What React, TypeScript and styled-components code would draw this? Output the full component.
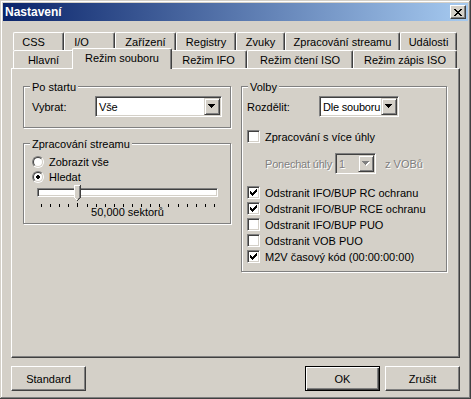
import React from 'react';
import styled, { createGlobalStyle } from 'styled-components';

const GlobalStyle = createGlobalStyle`
  html, body { margin: 0; padding: 0; background: #D4D0C8; }
  body {
    font-family: "Liberation Sans", Arial, sans-serif;
    font-size: 11px;
    color: #000;
  }
  * { box-sizing: border-box; }
`;

const Window = styled.div`
  width: 471px;
  height: 399px;
  background: #D4D0C8;
  padding: 3px;
  display: flex;
  flex-direction: column;
  box-shadow: inset -1px -1px 0 #404040, inset 1px 1px 0 #D4D0C8,
    inset -2px -2px 0 #808080, inset 2px 2px 0 #ffffff;
`;

const TitleBar = styled.div`
  height: 18px;
  flex: none;
  display: flex;
  align-items: center;
  justify-content: space-between;
  padding: 0 2px;
  background: linear-gradient(to right, #0a246a, #a6caf0);
`;

const Title = styled.span`
  color: #fff;
  font-weight: bold;
  font-size: 12px;
  white-space: nowrap;
`;

const CloseButton = styled.div`
  width: 16px;
  height: 14px;
  background: #d4d0c8;
  border: 1px solid;
  border-color: #fff #404040 #404040 #fff;
  box-shadow: inset -1px -1px 0 #808080;
  display: flex;
  align-items: center;
  justify-content: center;
`;

const Body = styled.div`
  flex: 1;
  display: flex;
  flex-direction: column;
  padding: 11px 8px 0 8px;
`;

const TabRows = styled.div`
  display: flex;
  flex-direction: column;
  padding-left: 2px;
`;

const TabRow = styled.div`
  display: flex;
  height: 18px;
`;

const Tab = styled.div<{ $w: number; $pr?: number; $selected?: boolean }>`
  width: ${(p) => p.$w}px;
  height: ${(p) => (p.$selected ? 21 : 18)}px;
  flex: none;
  background: #d4d0c8;
  border-top: 1px solid #fff;
  border-left: 1px solid #fff;
  border-right: 1px solid #404040;
  border-radius: 2px 2px 0 0;
  box-shadow: inset -1px 0 0 #808080;
  display: flex;
  align-items: center;
  justify-content: center;
  white-space: nowrap;
  padding-right: ${(p) => p.$pr ?? 0}px;
  padding-top: ${(p) => (p.$selected ? 0 : 1)}px;
  padding-bottom: ${(p) => (p.$selected ? 2 : 0)}px;
  margin: ${(p) => (p.$selected ? '-2px -2px -1px -2px' : '0')};
  position: ${(p) => (p.$selected ? 'relative' : 'static')};
  z-index: ${(p) => (p.$selected ? 1 : 'auto')};
`;

const Panel = styled.div`
  height: 290px;
  flex: none;
  border: 1px solid;
  border-color: #fff #404040 #404040 #fff;
  box-shadow: inset -1px -1px 0 #808080;
  padding: 17px 0 0 11px;
  display: grid;
  grid-template-columns: 208px 206px;
  column-gap: 10px;
  align-items: start;
`;

const Column = styled.div`
  display: flex;
  flex-direction: column;
  gap: 15px;
`;

const Group = styled.div<{ $h: number; $pl: number; $pt: number }>`
  position: relative;
  height: ${(p) => p.$h}px;
  border: 1px solid #808080;
  box-shadow: inset 1px 1px 0 #fff, 1px 1px 0 #fff;
  padding: ${(p) => p.$pt}px 8px 0 ${(p) => p.$pl}px;
  display: flex;
  flex-direction: column;
`;

const Legend = styled.span`
  position: absolute;
  top: -6px;
  left: 6px;
  padding: 0 2px;
  line-height: 13px;
  background: #d4d0c8;
  white-space: nowrap;
`;

const FieldRow = styled.div`
  display: flex;
  align-items: center;
  height: 21px;
`;

const FieldLabel = styled.span<{ $w: number; $disabled?: boolean }>`
  width: ${(p) => p.$w}px;
  flex: none;
  white-space: nowrap;
  color: ${(p) => (p.$disabled ? '#808080' : '#000')};
  text-shadow: ${(p) => (p.$disabled ? '1px 1px 0 #fff' : 'none')};
  letter-spacing: ${(p) => (p.$disabled ? '-0.2px' : '0')};
`;

const Combo = styled.div<{ $w: number; $disabled?: boolean }>`
  width: ${(p) => p.$w}px;
  height: 21px;
  flex: none;
  display: flex;
  background: ${(p) => (p.$disabled ? '#d4d0c8' : '#fff')};
  border: 1px solid;
  border-color: #808080 #fff #fff #808080;
  box-shadow: inset 1px 1px 0 #404040, inset -1px -1px 0 #d4d0c8;
  padding: 1px;
`;

const ComboText = styled.span<{ $disabled?: boolean }>`
  flex: 1;
  min-width: 0;
  display: flex;
  align-items: center;
  padding-left: 2px;
  white-space: nowrap;
  overflow: hidden;
  letter-spacing: -0.2px;
  color: ${(p) => (p.$disabled ? '#808080' : '#000')};
  text-shadow: ${(p) => (p.$disabled ? '1px 1px 0 #fff' : 'none')};
`;

const DropButton = styled.span`
  width: 16px;
  flex: none;
  background: #d4d0c8;
  border: 1px solid;
  border-color: #d4d0c8 #404040 #404040 #d4d0c8;
  box-shadow: inset 1px 1px 0 #fff, inset -1px -1px 0 #808080;
  display: flex;
  align-items: center;
  justify-content: center;
`;

const OptionRow = styled.div`
  display: flex;
  align-items: center;
  gap: 5px;
  white-space: nowrap;
`;

const RadioList = styled.div`
  display: flex;
  flex-direction: column;
  gap: 1px;
`;

const RadioRow = styled(OptionRow)`
  height: 14px;
`;

const RadioOuter = styled.span`
  width: 12px;
  height: 12px;
  flex: none;
  border-radius: 50%;
  border: 1px solid;
  border-color: #808080 #fff #fff #808080;
  display: flex;
`;

const RadioInner = styled.span`
  flex: 1;
  border-radius: 50%;
  border: 1px solid;
  border-color: #404040 #d4d0c8 #d4d0c8 #404040;
  background: #fff;
  display: flex;
  align-items: center;
  justify-content: center;
`;

const Slider = styled.div`
  position: relative;
  margin-top: 1px;
  height: 21px;
  width: 190px;
`;

const Track = styled.div`
  margin: 3px 0 0 5px;
  width: 181px;
  height: 9px;
  background: #fff;
  border: 1px solid;
  border-color: #808080 #fff #fff #808080;
  box-shadow: inset 1px 1px 0 #404040, inset -1px -1px 0 #d4d0c8;
`;

const Thumb = styled.svg`
  position: absolute;
  left: 42px;
  top: 0;
`;

const Ticks = styled.svg`
  display: block;
  margin-top: 6px;
`;

const SliderCaption = styled.div`
  margin-left: 5px;
  width: 181px;
  text-align: center;
  line-height: 13px;
  white-space: nowrap;
`;

const CheckRow = styled(OptionRow)`
  height: 13px;
`;

const CheckBox = styled.span`
  width: 13px;
  height: 13px;
  flex: none;
  background: #fff;
  border: 1px solid;
  border-color: #808080 #fff #fff #808080;
  box-shadow: inset 1px 1px 0 #404040, inset -1px -1px 0 #d4d0c8;
  display: flex;
  align-items: center;
  justify-content: center;
`;

const CheckList = styled.div`
  display: flex;
  flex-direction: column;
  gap: 3px;
  margin-top: 12px;
`;

const AngleRow = styled(FieldRow)`
  margin-top: 10px;
  padding-left: 18px;
`;

const DisabledText = styled.span<{ $ml?: number }>`
  margin-left: ${(p) => p.$ml ?? 0}px;
  color: #808080;
  text-shadow: 1px 1px 0 #fff;
  white-space: nowrap;
`;

const Gap = styled.div<{ $h: number }>`
  height: ${(p) => p.$h}px;
  flex: none;
`;

const ButtonRow = styled.div`
  display: flex;
  gap: 5px;
  margin-top: 8px;
`;

const Spacer = styled.div`
  flex: 1;
`;

const Button = styled.div<{ $default?: boolean }>`
  width: 75px;
  height: 25px;
  flex: none;
  background: #d4d0c8;
  display: flex;
  align-items: center;
  justify-content: center;
  white-space: nowrap;
  border: 1px solid;
  border-color: ${(p) => (p.$default ? '#000' : '#fff #404040 #404040 #fff')};
  box-shadow: ${(p) =>
    p.$default
      ? 'inset 1px 1px 0 #fff, inset -1px -1px 0 #404040, inset -2px -2px 0 #808080'
      : 'inset -1px -1px 0 #808080'};
`;

const CloseGlyph = () => (
  <svg width="8" height="7" viewBox="0 0 8 7" shapeRendering="crispEdges">
    <path
      fill="#000"
      d="M0 0h2v1H0zM6 0h2v1H6zM1 1h2v1H1zM5 1h2v1H5zM2 2h4v1H2zM3 3h2v1H3zM2 4h4v1H2zM1 5h2v1H1zM5 5h2v1H5zM0 6h2v1H0zM6 6h2v1H6z"
    />
  </svg>
);

const Arrow = ({ disabled }: { disabled?: boolean }) => (
  <svg width="8" height="5" viewBox="0 0 8 5" shapeRendering="crispEdges">
    {disabled && <path fill="#fff" d="M1 1h7v1H1zM2 2h5v1H2zM3 3h3v1H3zM4 4h1v1H4z" />}
    <path
      fill={disabled ? '#808080' : '#000'}
      d="M0 0h7v1H0zM1 1h5v1H1zM2 2h3v1H2zM3 3h1v1H3z"
    />
  </svg>
);

const CheckMark = () => (
  <svg width="7" height="7" viewBox="0 0 7 7" shapeRendering="crispEdges">
    <path
      fill="#000"
      d="M6 0h1v1H6zM5 1h2v1H5zM0 2h1v1H0zM4 2h3v1H4zM0 3h2v1H0zM3 3h3v1H3zM0 4h5v1H0zM1 5h3v1H1zM2 6h1v1H2z"
    />
  </svg>
);

const RadioDot = () => (
  <svg width="4" height="4" viewBox="0 0 4 4" shapeRendering="crispEdges">
    <path fill="#000" d="M1 0h2v1H1zM0 1h4v2H0zM1 3h2v1H1z" />
  </svg>
);

const ComboBox = ({ w, value, disabled }: { w: number; value: string; disabled?: boolean }) => (
  <Combo $w={w} $disabled={disabled}>
    <ComboText $disabled={disabled}>{value}</ComboText>
    <DropButton>
      <Arrow disabled={disabled} />
    </DropButton>
  </Combo>
);

const Check = ({ label, checked }: { label: string; checked?: boolean }) => (
  <CheckRow>
    <CheckBox>{checked && <CheckMark />}</CheckBox>
    <span>{label}</span>
  </CheckRow>
);

const topTabs: { label: string; w: number; pr?: number }[] = [
  { label: 'CSS', w: 51, pr: 10 },
  { label: 'I/O', w: 51, pr: 16 },
  { label: 'Zařízení', w: 61 },
  { label: 'Registry', w: 60 },
  { label: 'Zvuky', w: 49 },
  { label: 'Zpracování streamu', w: 115 },
  { label: 'Události', w: 57 },
];

const bottomTabs: { label: string; w: number; selected?: boolean }[] = [
  { label: 'Hlavní', w: 61 },
  { label: 'Režim souboru', w: 100, selected: true },
  { label: 'Režim IFO', w: 77 },
  { label: 'Režim čtení ISO', w: 106 },
  { label: 'Režim zápis ISO', w: 104 },
];

const tickXs = Array.from({ length: 20 }, (_, i) => Math.round(9 + (i * 173) / 19));

export default function App() {
  return (
    <>
      <GlobalStyle />
      <Window>
        <TitleBar>
          <Title>Nastavení</Title>
          <CloseButton>
            <CloseGlyph />
          </CloseButton>
        </TitleBar>
        <Body>
          <TabRows>
            <TabRow>
              {topTabs.map((t) => (
                <Tab key={t.label} $w={t.w} $pr={t.pr}>
                  {t.label}
                </Tab>
              ))}
            </TabRow>
            <TabRow>
              {bottomTabs.map((t) => (
                <Tab key={t.label} $w={t.w} $selected={t.selected}>
                  {t.label}
                </Tab>
              ))}
            </TabRow>
          </TabRows>
          <Panel>
            <Column>
              <Group $h={42} $pl={8} $pt={9}>
                <Legend>Po startu</Legend>
                <FieldRow>
                  <FieldLabel $w={63}>Vybrat:</FieldLabel>
                  <ComboBox w={127} value="Vše" />
                </FieldRow>
              </Group>
              <Group $h={81} $pl={8} $pt={11}>
                <Legend>Zpracování streamu</Legend>
                <RadioList>
                  <RadioRow>
                    <RadioOuter>
                      <RadioInner />
                    </RadioOuter>
                    <span>Zobrazit vše</span>
                  </RadioRow>
                  <RadioRow>
                    <RadioOuter>
                      <RadioInner>
                        <RadioDot />
                      </RadioInner>
                    </RadioOuter>
                    <span>Hledat</span>
                  </RadioRow>
                </RadioList>
                <Slider>
                  <Track />
                  <Ticks width="190" height="4" viewBox="0 0 190 4" shapeRendering="crispEdges">
                    {tickXs.map((x, i) => (
                      <rect key={i} x={x} y={i === 4 ? 0 : 1} width="1" height={i === 4 ? 4 : 3} fill="#000" />
                    ))}
                  </Ticks>
                  <Thumb width="7" height="16" viewBox="0 0 7 16" shapeRendering="crispEdges">
                    <polygon points="0,0 7,0 7,12 3.5,16 0,12" fill="#d4d0c8" />
                    <rect x="0" y="0" width="6" height="1" fill="#fff" />
                    <rect x="0" y="0" width="1" height="13" fill="#fff" />
                    <rect x="1" y="13" width="1" height="1" fill="#fff" />
                    <rect x="2" y="14" width="1" height="1" fill="#fff" />
                    <rect x="6" y="0" width="1" height="13" fill="#404040" />
                    <rect x="5" y="1" width="1" height="12" fill="#808080" />
                    <rect x="5" y="13" width="1" height="1" fill="#404040" />
                    <rect x="4" y="13" width="1" height="1" fill="#808080" />
                    <rect x="4" y="14" width="1" height="1" fill="#404040" />
                    <rect x="3" y="15" width="1" height="1" fill="#404040" />
                  </Thumb>
                </Slider>
                <SliderCaption>50,000 sektorů</SliderCaption>
              </Group>
            </Column>
            <Group $h={186} $pl={5} $pt={9}>
              <Legend>Volby</Legend>
              <FieldRow>
                <FieldLabel $w={72}>Rozdělit:</FieldLabel>
                <ComboBox w={80} value="Dle souboru" />
              </FieldRow>
              <Gap $h={13} />
              <Check label="Zpracování s více úhly" />
              <AngleRow>
                <FieldLabel $w={70} $disabled>
                  Ponechat úhly
                </FieldLabel>
                <ComboBox w={41} value="1" disabled />
                <DisabledText $ml={9}>z VOBů</DisabledText>
              </AngleRow>
              <CheckList>
                <Check label="Odstranit IFO/BUP RC ochranu" checked />
                <Check label="Odstranit IFO/BUP RCE ochranu" checked />
                <Check label="Odstranit IFO/BUP PUO" />
                <Check label="Odstranit VOB PUO" />
                <Check label="M2V časový kód (00:00:00:00)" checked />
              </CheckList>
            </Group>
          </Panel>
          <ButtonRow>
            <Button>Standard</Button>
            <Spacer />
            <Button $default>OK</Button>
            <Button>Zrušit</Button>
          </ButtonRow>
        </Body>
      </Window>
    </>
  );
}
